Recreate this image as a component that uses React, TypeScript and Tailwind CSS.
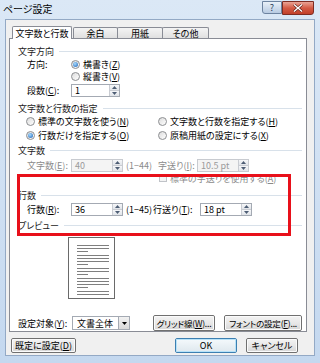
import React from "react";

const FONT = "font-['Noto_Sans_CJK_JP',sans-serif] [font-feature-settings:'palt']";

function Mn({ c }: { c: string }) {
  return <span className="underline underline-offset-[1px] decoration-[0.5px]">{c}</span>;
}

function Heading({ children, className = "" }: { children: React.ReactNode; className?: string }) {
  return (
    <div className={`flex items-center h-[14px] pl-[8px] pr-[4px] ${className}`}>
      <span className="text-[9px] leading-none whitespace-nowrap text-[#1a1a1a]">{children}</span>
      <div className="flex-1 h-px bg-[#d8e1ea] ml-[5px]" />
    </div>
  );
}

function Radio({ checked = false }: { checked?: boolean }) {
  return (
    <span className="inline-flex w-[9px] h-[9px] shrink-0 rounded-full border border-[#8c8e91] bg-linear-to-br from-[#dcdcdc] to-[#ffffff] items-center justify-center">
      {checked && (
        <span className="w-[5px] h-[5px] rounded-full bg-[radial-gradient(circle_at_40%_35%,#a8dcff,#1a5fb4)]" />
      )}
    </span>
  );
}

function SpinArrow({ up }: { up: boolean }) {
  return (
    <svg width="5" height="3" viewBox="0 0 5 3">
      <path d={up ? "M0 3 L2.5 0 L5 3Z" : "M0 0 L2.5 3 L5 0Z"} fill="#4d5d74" />
    </svg>
  );
}

function Spin({ value, disabled = false, className = "" }: { value: string; disabled?: boolean; className?: string }) {
  return (
    <div
      className={`flex h-[13px] border ${disabled ? "border-[#c8cbd0] bg-[#f4f4f4]" : "border-[#a4aab3] bg-white"} ${className}`}
    >
      <div className={`flex-1 flex items-center pl-[3px] text-[9px] leading-none whitespace-nowrap ${disabled ? "text-[#9a9a9a]" : "text-black"}`}>
        {value}
      </div>
      <div className="w-[10px] flex flex-col border-l border-[#c9ccd2]">
        <div className="flex-1 flex items-center justify-center bg-linear-to-b from-[#f6f7f9] to-[#e1e4e9] border-b border-[#c9ccd2]">
          <SpinArrow up />
        </div>
        <div className="flex-1 flex items-center justify-center bg-linear-to-b from-[#f6f7f9] to-[#e1e4e9]">
          <SpinArrow up={false} />
        </div>
      </div>
    </div>
  );
}

function Btn({ children, className = "", focused = false }: { children: React.ReactNode; className?: string; focused?: boolean }) {
  return (
    <div
      className={`flex items-center justify-center rounded-[2px] border leading-none whitespace-nowrap ${
        focused
          ? "border-[#3c7fb1] bg-linear-to-b from-[#f4f9fc] to-[#dfe8ee]"
          : "border-[#707070] bg-linear-to-b from-[#f3f3f3] via-[#e8e8e8] to-[#d6d6d6]"
      } ${className}`}
    >
      <div className={`w-full h-full flex items-center justify-center rounded-[1px] border whitespace-nowrap ${focused ? "border-[#b7e2f8]" : "border-[#fbfbfb]"}`}>
        {children}
      </div>
    </div>
  );
}

function Preview() {
  const lines: React.ReactNode[] = [];
  let y = 7;
  let k = 0;
  const groups = [3, 4, 3, 4, 3, 3, 4];
  for (const g of groups) {
    for (let i = 0; i < g; i++) {
      if (y > 58) break;
      const short = i === g - 1;
      lines.push(<rect key={k++} x={8} y={y} width={short ? 11 : 32} height={1} fill="#7f7f7f" />);
      y += 3;
    }
    y += 1;
  }
  return (
    <svg width="45" height="60" viewBox="0 0 45 60">
      {lines}
    </svg>
  );
}

export default function App() {
  return (
    <div className={`relative w-[320px] h-[363px] overflow-hidden bg-linear-to-b from-[#dbe8f6] to-[#c4d8ef] text-black ${FONT}`}>
      {/* title bar */}
      <div className="h-[19px] flex items-start">
        <div className="pl-[3px] pt-[2px] text-[10px] leading-[13px] text-black">ページ設定</div>
        <div className="ml-auto mr-[6px] flex">
          <div className="w-[20px] h-[13px] mt-[1px] rounded-bl-[3px] border border-[#6d83a0] bg-linear-to-b from-[#e9f0f8] to-[#b8cbe2] flex items-center justify-center text-[9px] leading-none text-[#2a3d5a]">
            ?
          </div>
          <div className="w-[32px] h-[14px] mt-[1px] rounded-br-[3px] border border-[#7e2c22] bg-linear-to-b from-[#e9a395] via-[#d45a44] to-[#c1402a] flex items-center justify-center">
            <svg width="10" height="8" viewBox="0 0 10 8">
              <path d="M1 0.5 L9 7.5 M9 0.5 L1 7.5" stroke="#5a1a12" strokeWidth="2.6" />
              <path d="M1 0.5 L9 7.5 M9 0.5 L1 7.5" stroke="#ffffff" strokeWidth="1.4" />
            </svg>
          </div>
        </div>
      </div>

      {/* client area */}
      <div className="mx-[5px] h-[337px] border border-[#93a9c5] bg-[#f0f0f0] flex flex-col">
        {/* tabs */}
        <div className="pt-[6px] pl-[6px] flex items-end h-[18px]">
          <div className="relative z-10 w-[60px] h-[13px] -mb-px bg-white border border-b-0 border-[#898c95] rounded-t-[2px] flex items-center justify-center text-[9px] leading-none">
            文字数と行数
          </div>
          <div className="ml-px w-[45px] h-[11px] border border-b-0 border-[#898c95] rounded-t-[2px] bg-linear-to-b from-[#f4f4f4] to-[#e0e0e0] flex items-center justify-center text-[9px] leading-none">
            余白
          </div>
          <div className="-ml-px w-[46px] h-[11px] border border-b-0 border-[#898c95] rounded-t-[2px] bg-linear-to-b from-[#f4f4f4] to-[#e0e0e0] flex items-center justify-center text-[9px] leading-none">
            用紙
          </div>
          <div className="-ml-px w-[47px] h-[11px] border border-b-0 border-[#898c95] rounded-t-[2px] bg-linear-to-b from-[#f4f4f4] to-[#e0e0e0] flex items-center justify-center text-[9px] leading-none">
            その他
          </div>
        </div>

        {/* panel */}
        <div className="ml-[3px] w-[298px] h-[294px] border border-[#898c95] bg-white flex flex-col pt-[5px] text-[9px] leading-none">
          <Heading>文字方向</Heading>
          <div className="h-[12px] flex items-center pl-[17px]">
            <div className="w-[44px]">方向:</div>
            <Radio checked />
            <span className="ml-[3px]">
              横書き(<Mn c="Z" />)
            </span>
          </div>
          <div className="h-[13px] flex items-center pl-[61px]">
            <Radio />
            <span className="ml-[3px]">
              縦書き(<Mn c="V" />)
            </span>
          </div>
          <div className="h-[14px] flex items-center pl-[17px]">
            <div className="w-[44px]">
              段数(<Mn c="C" />):
            </div>
            <Spin value="1" className="w-[49px]" />
          </div>

          <Heading className="mt-[4px]">文字数と行数の指定</Heading>
          <div className="h-[13px] flex items-center pl-[16px]">
            <div className="w-[132px] flex items-center">
              <Radio />
              <span className="ml-[3px]">
                標準の文字数を使う(<Mn c="N" />)
              </span>
            </div>
            <Radio />
            <span className="ml-[3px]">
              文字数と行数を指定する(<Mn c="H" />)
            </span>
          </div>
          <div className="h-[14px] flex items-center pl-[16px]">
            <div className="w-[132px] flex items-center">
              <Radio checked />
              <span className="ml-[3px]">
                行数だけを指定する(<Mn c="O" />)
              </span>
            </div>
            <Radio />
            <span className="ml-[3px]">
              原稿用紙の設定にする(<Mn c="X" />)
            </span>
          </div>

          <Heading className="mt-px">文字数</Heading>
          <div className="mt-px h-[14px] flex items-center pl-[17px] text-[#8a8a8a]">
            <div className="w-[44px]">
              文字数(<Mn c="E" />):
            </div>
            <Spin value="40" disabled className="w-[52px]" />
            <div className="ml-[3px] w-[32px]">(1−44)</div>
            <div className="w-[39px]">
              字送り(<Mn c="I" />):
            </div>
            <Spin value="10.5 pt" disabled className="w-[52px]" />
          </div>
          <div className="h-[12px] flex items-center pl-[149px] text-[#8a8a8a]">
            <span className="w-[8px] h-[8px] border border-[#c0c3c8] bg-[#f4f4f4]" />
            <span className="ml-[3px]">
              標準の字送りを使用する(<Mn c="A" />)
            </span>
          </div>

          <Heading className="mt-[4px]">行数</Heading>
          <div className="h-[14px] flex items-center pl-[17px]">
            <div className="w-[44px]">
              行数(<Mn c="R" />):
            </div>
            <Spin value="36" className="w-[52px]" />
            <div className="ml-[3px] w-[27px]">(1−45)</div>
            <div className="w-[47px]">
              行送り(<Mn c="T" />):
            </div>
            <Spin value="18 pt" className="w-[52px]" />
          </div>

          <Heading className="mt-[2px]">プレビュー</Heading>
          <div className="mt-[5px] ml-[58px] w-[47px] h-[62px] border border-[#6a6a6a] bg-white">
            <Preview />
          </div>

          <div className="mt-[16px] h-[16px] flex items-center pl-[8px]">
            <div className="w-[54px]">
              設定対象(<Mn c="Y" />):
            </div>
            <div className="w-[58px] h-[14px] flex border border-[#a4aab3] bg-white">
              <div className="flex-1 flex items-center pl-[4px]">文書全体</div>
              <div className="w-[11px] flex items-center justify-center bg-linear-to-b from-[#f2f2f2] to-[#d9d9d9] border-l border-[#a4aab3]">
                <svg width="5" height="3" viewBox="0 0 5 3">
                  <path d="M0 0 L2.5 3 L5 0Z" fill="#000" />
                </svg>
              </div>
            </div>
            <Btn className="ml-[23px] w-[62px] h-[16px] text-[8.5px] tracking-[-0.2px]">
              グリッド線(<Mn c="W" />)...
            </Btn>
            <Btn className="ml-[9px] w-[78px] h-[16px] text-[8.5px] tracking-[-0.2px]">
              フォントの設定(<Mn c="F" />)...
            </Btn>
          </div>
        </div>

        {/* bottom buttons */}
        <div className="mt-[6px] flex items-center pr-[16px] text-[9px]">
          <Btn className="ml-[5px] w-[65px] h-[15px]">
            既定に設定(<Mn c="D" />)
          </Btn>
          <Btn focused className="ml-auto w-[62px] h-[15px]">
            OK
          </Btn>
          <Btn className="ml-[9px] w-[52px] h-[15px]">キャンセル</Btn>
        </div>
      </div>

      {/* red highlight */}
      <div className="absolute left-[17px] top-[174px] w-[274px] h-[62px] border-[3px] border-[#e8101a] pointer-events-none" />
    </div>
  );
}
